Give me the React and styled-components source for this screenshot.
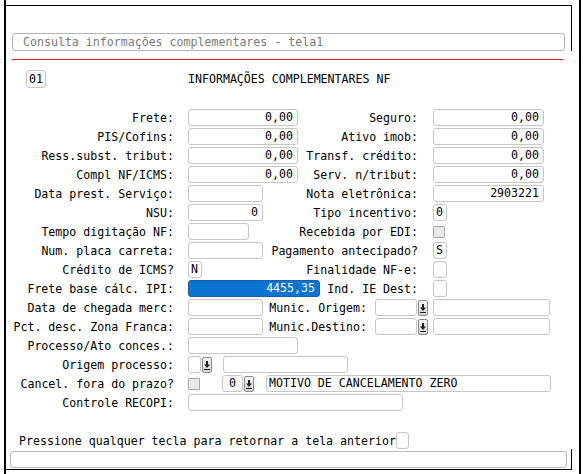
import React from "react";
import styled, { createGlobalStyle } from "styled-components";

const Global = createGlobalStyle`
  html, body { margin: 0; padding: 0; background: #fff; }
  body { font-family: "DejaVu Sans Mono", "Liberation Mono", monospace; font-size: 11.6px; color: #000; }
`;

const Screen = styled.div`
  width: 583px;
  height: 474px;
  overflow: hidden;
  display: flex;
`;

const Frame = styled.div`
  margin-left: 4px;
  width: 577px;
  height: 474px;
  box-sizing: border-box;
  border-left: 2px solid #000;
  border-right: 2px solid #000;
`;

const Panel = styled.div`
  position: relative;
  margin-top: 5px;
  width: 566px;
  height: 465px;
  box-sizing: border-box;
  border-top: 1px solid #000;
  border-bottom: 1px solid #000;
  display: flex;
  flex-direction: column;
  &::before, &::after {
    content: "";
    position: absolute;
    right: 0;
    width: 1px;
    background: #000;
  }
  &::before { top: 0; height: 45px; }
  &::after { bottom: 0; height: 20px; }
`;

const TitleBox = styled.div`
  margin: 27px 0 0 6px;
  width: 553px;
  height: 18px;
  box-sizing: border-box;
  border: 1px solid #b4b4b4;
  border-radius: 3px;
  padding-left: 10px;
  color: #7a7a7a;
  line-height: 16px;
  white-space: pre;
`;

const RedLine = styled.div`
  margin: 8px 0 0 6px;
  width: 551px;
  height: 1px;
  background: #d8262b;
`;

const Header = styled.div`
  margin: 10px 0 0 20px;
  display: flex;
  align-items: center;
  height: 18px;
`;

const Box = styled.div`
  flex: none;
  width: ${(p) => p.$w}px;
  height: ${(p) => p.$h || 17}px;
  box-sizing: border-box;
  border: 1px solid ${(p) => (p.$sel ? "#1a5fa8" : "#c6c6c6")};
  border-radius: 3px;
  background: ${(p) => (p.$sel ? "#0a74d0" : "#fff")};
  color: ${(p) => (p.$sel ? "#fff" : "#000")};
  text-align: ${(p) => p.$align || "left"};
  padding: 0 ${(p) => (p.$align === "right" ? 4 : 2)}px;
  line-height: ${(p) => (p.$h || 17) - 2}px;
  margin-left: ${(p) => p.$ml || 0}px;
  white-space: pre;
  overflow: hidden;
`;

const HeaderTitle = styled.div`
  margin-left: 142px;
  white-space: pre;
`;

const Form = styled.div`
  margin: 21px 0 0 4px;
  display: flex;
  flex-direction: column;
`;

const Row = styled.div`
  display: flex;
  align-items: center;
  height: 17px;
  margin-bottom: 2px;
`;

const Label = styled.div`
  flex: none;
  width: 178px;
  box-sizing: border-box;
  padding-right: 14px;
  text-align: right;
  white-space: pre;
`;

const Mid = styled.div`
  flex: none;
  width: 245px;
  display: flex;
  align-items: center;
  padding-right: ${(p) => p.$pr || 0}px;
  box-sizing: border-box;
`;

const RLabel = styled.div`
  margin-left: auto;
  padding-right: ${(p) => (p.$pr === undefined ? 15 : p.$pr)}px;
  white-space: pre;
`;

const Check = styled.div`
  flex: none;
  width: 12px;
  height: 12px;
  box-sizing: border-box;
  border: 1px solid #a6a6a6;
  border-radius: 1px;
  background: #e8e8e8;
  margin-left: ${(p) => p.$ml || 0}px;
`;

const Btn = styled.div`
  flex: none;
  width: 10px;
  height: 16px;
  box-sizing: border-box;
  border: 1px solid #8a8a8a;
  border-radius: 2px;
  background: linear-gradient(#f4f4f4, #d6d6d6);
  margin-left: ${(p) => p.$ml || 1}px;
  display: flex;
  align-items: center;
  justify-content: center;
`;

const DropBtn = ({ ml }) => (
  <Btn $ml={ml}>
    <svg width="8" height="12" viewBox="0 0 8 12">
      <rect x="3" y="2" width="2" height="4" fill="#1e1e1e" />
      <path d="M1 5.5 H7 L4 9 Z" fill="#1e1e1e" />
      <rect x="1" y="10" width="6" height="1" fill="#1e1e1e" />
    </svg>
  </Btn>
);

const Footer = styled.div`
  margin: 19px 0 0 13px;
  display: flex;
  align-items: center;
  height: 17px;
  white-space: pre;
`;

const Status = styled.div`
  margin: 2px 0 0 4px;
  width: 557px;
  height: 17px;
  box-sizing: border-box;
  border: 1px solid #b8b8b8;
  border-radius: 3px;
`;

export default function App() {
  return (
    <Screen>
      <Global />
      <Frame>
        <Panel>
          <TitleBox>Consulta informações complementares - tela1</TitleBox>
          <RedLine />
          <Header>
            <Box $w={20} $h={18}>01</Box>
            <HeaderTitle>INFORMAÇÕES COMPLEMENTARES NF</HeaderTitle>
          </Header>
          <Form>
            <Row>
              <Label>Frete:</Label>
              <Mid>
                <Box $w={110} $align="right">0,00</Box>
                <RLabel>Seguro:</RLabel>
              </Mid>
              <Box $w={111} $align="right">0,00</Box>
            </Row>
            <Row>
              <Label>PIS/Cofins:</Label>
              <Mid>
                <Box $w={110} $align="right">0,00</Box>
                <RLabel>Ativo imob:</RLabel>
              </Mid>
              <Box $w={111} $align="right">0,00</Box>
            </Row>
            <Row>
              <Label>Ress.subst. tribut:</Label>
              <Mid>
                <Box $w={110} $align="right">0,00</Box>
                <RLabel>Transf. crédito:</RLabel>
              </Mid>
              <Box $w={111} $align="right">0,00</Box>
            </Row>
            <Row>
              <Label>Compl NF/ICMS:</Label>
              <Mid>
                <Box $w={110} $align="right">0,00</Box>
                <RLabel>Serv. n/tribut:</RLabel>
              </Mid>
              <Box $w={111} $align="right">0,00</Box>
            </Row>
            <Row>
              <Label>Data prest. Serviço:</Label>
              <Mid>
                <Box $w={75} />
                <RLabel>Nota eletrônica:</RLabel>
              </Mid>
              <Box $w={111} $align="right">2903221</Box>
            </Row>
            <Row>
              <Label>NSU:</Label>
              <Mid>
                <Box $w={75} $align="right">0</Box>
                <RLabel>Tipo incentivo:</RLabel>
              </Mid>
              <Box $w={14}>0</Box>
            </Row>
            <Row>
              <Label>Tempo digitação NF:</Label>
              <Mid>
                <Box $w={61} />
                <RLabel>Recebida por EDI:</RLabel>
              </Mid>
              <Check />
            </Row>
            <Row>
              <Label>Num. placa carreta:</Label>
              <Mid>
                <Box $w={75} />
                <RLabel>Pagamento antecipado?</RLabel>
              </Mid>
              <Box $w={14}>S</Box>
            </Row>
            <Row>
              <Label>Crédito de ICMS?</Label>
              <Mid>
                <Box $w={14}>N</Box>
                <RLabel>Finalidade NF-e:</RLabel>
              </Mid>
              <Box $w={14} />
            </Row>
            <Row>
              <Label>Frete base cálc. IPI:</Label>
              <Mid>
                <Box $w={132} $align="right" $sel>4455,35</Box>
                <RLabel>Ind. IE Dest:</RLabel>
              </Mid>
              <Box $w={14} />
            </Row>
            <Row>
              <Label>Data de chegada merc:</Label>
              <Mid $pr={5}>
                <Box $w={75} />
                <RLabel $pr={8}>Munic. Origem:</RLabel>
                <Box $w={42} />
                <DropBtn />
              </Mid>
              <Box $w={117} />
            </Row>
            <Row>
              <Label>Pct. desc. Zona Franca:</Label>
              <Mid $pr={5}>
                <Box $w={75} />
                <RLabel $pr={8}>Munic.Destino:</RLabel>
                <Box $w={42} />
                <DropBtn />
              </Mid>
              <Box $w={117} />
            </Row>
            <Row>
              <Label>Processo/Ato conces.:</Label>
              <Box $w={110} />
            </Row>
            <Row>
              <Label>Origem processo:</Label>
              <Box $w={13} />
              <DropBtn />
              <Box $w={125} $ml={11} />
            </Row>
            <Row>
              <Label>Cancel. fora do prazo?</Label>
              <Check />
              <Box $w={21} $ml={22} $align="center">0</Box>
              <DropBtn />
              <Box $w={285} $ml={12}>MOTIVO DE CANCELAMENTO ZERO</Box>
            </Row>
            <Row>
              <Label>Controle RECOPI:</Label>
              <Box $w={215} />
            </Row>
          </Form>
          <Footer>
            Pressione qualquer tecla para retornar a tela anterior
            <Box $w={13} />
          </Footer>
          <Status />
        </Panel>
      </Frame>
    </Screen>
  );
}
